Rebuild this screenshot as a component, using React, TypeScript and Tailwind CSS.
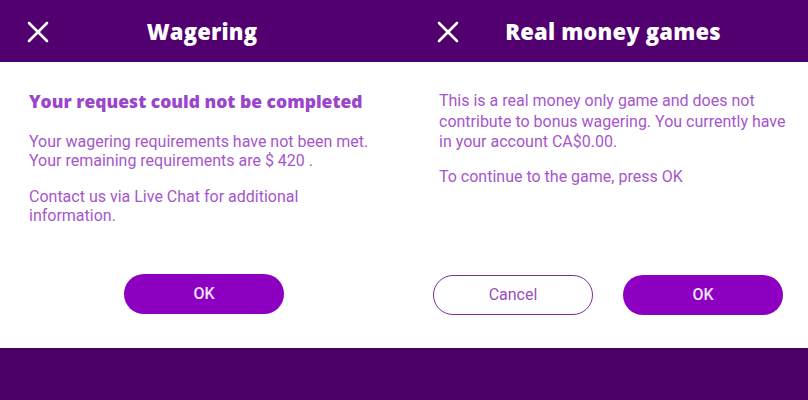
const CloseIcon = () => (
  <svg width="22" height="22" viewBox="0 0 22 22" fill="none">
    <path d="M2 2L20 20M20 2L2 20" stroke="white" strokeWidth="2.6" strokeLinecap="round" />
  </svg>
);

interface IHeaderProps {
  title: string;
  iconLeft: string;
  titlePad: string;
}

const Header = ({ title, iconLeft, titlePad }: IHeaderProps) => (
  <div className={`relative flex items-center justify-center h-[62px] bg-[#52006f] ${titlePad}`}>
    <button className={`absolute top-[21px] ${iconLeft}`}>
      <CloseIcon />
    </button>
    <div className="text-[22px] font-extrabold text-white tracking-[0.2px] [font-family:'Open_Sans',sans-serif]">
      {title}
    </div>
  </div>
);

const OkButton = () => (
  <button className="w-[160px] h-[40px] rounded-full bg-[#8d00c2] text-[#f3e3ff] text-[16px] font-medium">
    OK
  </button>
);

const App = () => {
  return (
    <div className="w-[808px] h-[400px] bg-[#4b0066] [font-family:Roboto,sans-serif]">
      <div className="grid grid-cols-2">
        {/* Wagering */}
        <div className="flex flex-col">
          <Header title="Wagering" iconLeft="left-[27px]" titlePad="" />
          <div className="flex flex-col h-[286px] bg-white px-[29px] pt-[28px] pb-[34px]">
            <div className="text-[17.5px] font-extrabold leading-[22px] text-[#9b45cc] [font-family:'Open_Sans',sans-serif]">
              Your request could not be completed
            </div>
            <p className="mt-[20px] text-[16px] leading-[19px] text-[#a656cc]">
              Your wagering requirements have not been met. Your remaining requirements are $ 420 .
            </p>
            <p className="mt-[17px] text-[16px] leading-[19px] text-[#a656cc] pr-[10px]">
              Contact us via Live Chat for additional information.
            </p>
            <div className="mt-auto flex justify-center pl-[4px]">
              <OkButton />
            </div>
          </div>
        </div>

        {/* Real money games */}
        <div className="flex flex-col">
          <Header title="Real money games" iconLeft="left-[33px]" titlePad="pl-[14px]" />
          <div className="flex flex-col h-[286px] bg-white pl-[35px] pr-[16px] pt-[29px] pb-[33px]">
            <p className="text-[16px] leading-[20.5px] text-[#a656cc]">
              This is a real money only game and does not contribute to bonus wagering. You currently have in your account CA$0.00.
            </p>
            <p className="mt-[14px] text-[16px] leading-[20.5px] text-[#a656cc]">
              To continue to the game, press OK
            </p>
            <div className="mt-auto flex gap-[30px] -ml-[6px]">
              <button className="w-[160px] h-[40px] rounded-full border border-[#7a2d99] text-[#9a4dbf] text-[16px]">
                Cancel
              </button>
              <OkButton />
            </div>
          </div>
        </div>
      </div>
    </div>
  );
};

export default App;
